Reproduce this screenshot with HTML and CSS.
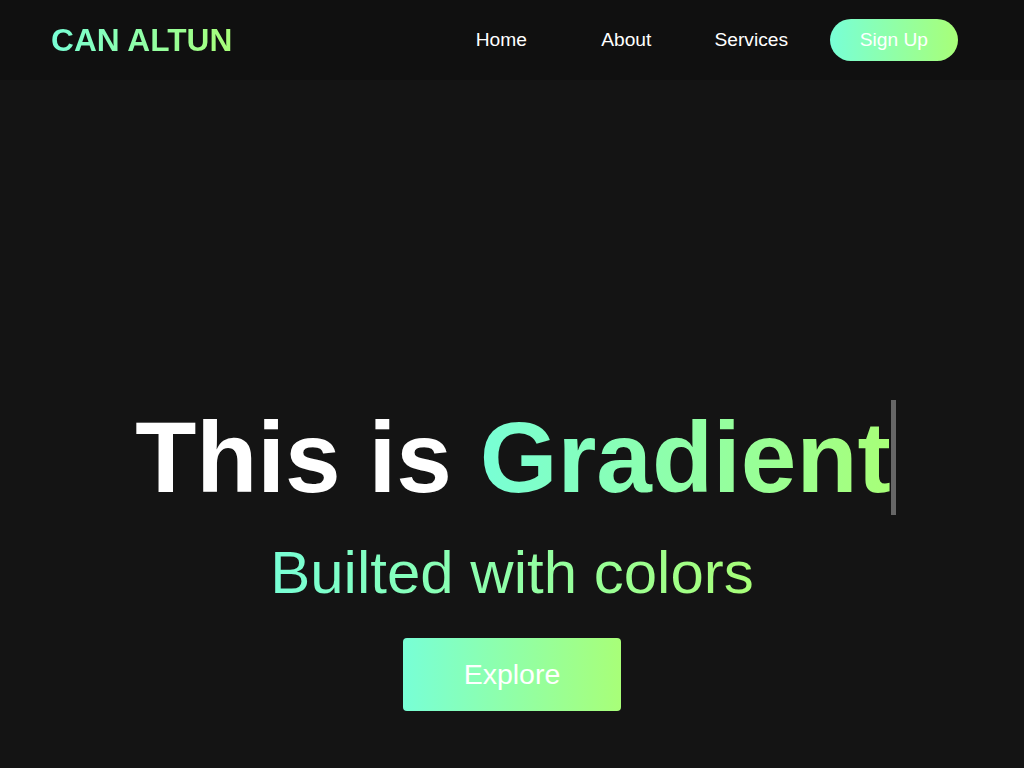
FILE: index.html
```html
<!DOCTYPE html>
<html lang="en">
<head>
<meta charset="utf-8">
<title>Can Altun</title>
<link rel="stylesheet" href="styles.css">
</head>
<body>
<header class="header">
  <a class="logo" href="#">CAN ALTUN</a>
  <nav class="nav">
    <a class="nav-link" href="#">Home</a>
    <a class="nav-link" href="#">About</a>
    <a class="nav-link" href="#">Services</a>
    <a class="signup" href="#">Sign Up</a>
  </nav>
</header>
<main class="hero">
  <h1 class="title">This is <span class="grad-text">Gradient</span></h1>
  <p class="subtitle"><span class="grad-text">Builted with colors</span></p>
  <a class="explore" href="#">Explore</a>
</main>
</body>
</html>
```

FILE: styles.css
```css
* { box-sizing: border-box; }
html, body {
  margin: 0;
  padding: 0;
  height: 100%;
  overflow: hidden;
}
body {
  background: #141414;
  font-family: "Liberation Sans", Arial, sans-serif;
  color: #fff;
}
a { text-decoration: none; color: inherit; }

.header {
  height: 80px;
  background: #101010;
  display: flex;
  align-items: center;
  justify-content: space-between;
  padding: 0 66px 0 51px;
}
.logo {
  font-size: 31.7px;
  font-weight: 700;
  background: linear-gradient(to right, #78ffd6, #a8ff78);
  -webkit-background-clip: text;
  background-clip: text;
  color: transparent;
}
.nav {
  display: flex;
  align-items: center;
}
.nav-link {
  width: 125px;
  text-align: center;
  font-size: 19.2px;
  color: #fff;
}
.signup {
  margin-left: 16px;
  font-size: 19.2px;
  line-height: 22px;
  padding: 10px 30px;
  border-radius: 21px;
  background: linear-gradient(to right, #78ffd6, #a8ff78);
  color: #fff;
}

.hero {
  display: flex;
  flex-direction: column;
  align-items: center;
  padding-top: 320px;
}
.title {
  margin: 0 0 0 7px;
  display: inline-block;
  font-size: 100px;
  font-weight: 700;
  line-height: 115px;
  border-right: 5px solid #666;
  color: #fff;
}
.grad-text {
  background: linear-gradient(to right, #78ffd6, #a8ff78);
  -webkit-background-clip: text;
  background-clip: text;
  color: transparent;
}
.subtitle {
  margin: 24px 0 0;
  font-size: 60px;
  line-height: 67px;
}
.explore {
  margin-top: 32px;
  width: 218px;
  height: 73px;
  display: flex;
  align-items: center;
  justify-content: center;
  font-size: 28.5px;
  border-radius: 4px;
  background: linear-gradient(to right, #78ffd6, #a8ff78);
  color: #fff;
}
```
